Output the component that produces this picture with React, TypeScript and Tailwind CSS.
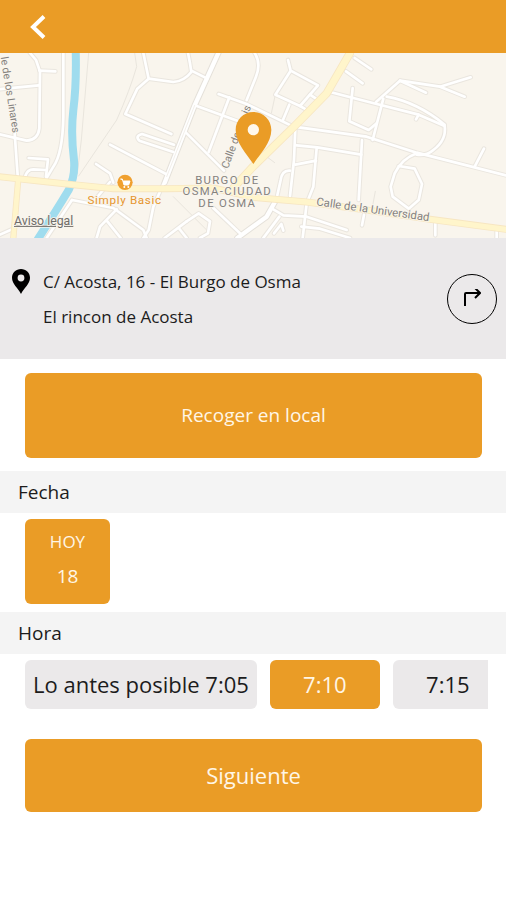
import { useState } from "react";
import clsx from "clsx";

const minorRoads = [
  // west side
  "M90 159 L108 180 L120 215 L118 385 Q114 420 80 422 L-5 402",
  "M118 212 L166 214",
  "M-5 268 L116 256",
  "M44 400 L54 540",
  "M190 159 L190 350 Q188 460 160 500 L136 540",
  "M76 528 Q82 508 100 508 L136 510",
  "M86 474 L144 478 L138 530",
  "M-5 706 L40 686",
  // between the river and the centre
  "M430 159 L446 236 L412 266 L376 342 L514 402",
  "M446 236 L520 246 Q552 244 574 216 L570 190 L564 159",
  "M574 212 L622 236",
  "M330 434 L498 522",
  "M522 434 L426 402 Q404 408 418 422 L520 456",
  "M584 316 L716 364",
  "M554 394 L672 512",
  "M656 282 L740 312 L880 380",
  "M688 292 L626 456",
  "M288 492 L330 520 L340 548",
  "M216 600 L340 624 L430 690 L440 714",
  "M140 714 L216 600",
  "M350 628 L300 680 L290 714",
  "M284 600 L330 546",
  "M490 552 L460 620 L446 690 L430 714",
  "M322 664 L362 714",
  "M494 714 L560 664",
  "M640 624 L720 700 M536 684 L560 714",
  "M560 664 L596 640 L630 664 L624 700 L600 714",
  // east side
  "M764 159 Q784 190 768 230 L740 300",
  "M864 180 L872 212 L826 284 L900 318 L954 256 L872 212",
  "M868 314 L848 362",
  "M900 318 L914 326",
  "M930 284 L948 296",
  "M1064 174 L1114 208",
  "M1038 214 L1088 250",
  "M990 276 L1130 312 L1256 344 L1334 378 Q1340 420 1300 450 Q1280 468 1250 464",
  "M1058 264 L1048 364 L1106 390 L1130 370",
  "M1128 306 L1200 242 L1320 260 L1412 232",
  "M1200 242 L1278 278 M1320 260 L1394 290",
  "M1160 290 Q1250 306 1334 374",
  "M1256 344 L1248 358",
  "M1150 296 L1118 420",
  "M880 380 L1100 410 L1250 458 L1518 526",
  "M1424 500 L1452 446",
  "M886 384 L882 480 L870 588",
  "M890 436 L952 442 L1084 464",
  "M886 494 L948 482",
  "M950 444 L940 560 L920 610 L908 714",
  "M1086 420 L1076 600",
  "M1250 460 Q1206 476 1184 520 L1172 560 L1178 590 L1226 626 L1256 600 L1266 552 L1244 506 L1196 498",
  "M870 512 Q846 510 842 540 L832 586",
  "M1092 644 L1086 676",
  "M820 628 L850 646 L920 650 L1040 690",
  "M838 650 L790 714",
  "M822 700 L844 672 L850 692",
  "M904 680 L960 686 L1050 714",
  "M1306 668 L1306 706 M1490 690 L1490 714",
];

const thinPaths = [
  "M266 159 L244 420 L232 520",
  "M404 159 L410 200 Q390 270 350 360 L236 528",
  "M520 590 L620 690",
  "M826 284 L814 340",
  "M800 470 L824 488",
  "M1126 574 L1118 616",
];

const mediumRoads = ["M655 159 L584 316 L494 548", "M712 714 L800 650 L828 600"];

const yellowRoads = [
  { d: "M54 546 L40 714", w: 14 },
  { d: "M-5 530 L220 554 L340 566 L500 566 L640 564 L759 592 L920 606 L1100 630 L1290 658 L1518 688", w: 16 },
  { d: "M700 564 L759 500 L880 382 L980 280 L1050 159", w: 20 },
];

function StreetMap() {
  return (
    <svg
      viewBox="0 159 1518 555"
      preserveAspectRatio="xMidYMid slice"
      className="block h-[185px] w-full bg-[#f9f5ed]"
      role="img"
      aria-label="Mapa de El Burgo de Osma"
    >
      <g fill="none" strokeLinecap="round" strokeLinejoin="round">
        <g stroke="#e9e5dd" strokeWidth="3">
          {thinPaths.map((d) => (
            <path key={d} d={d} />
          ))}
        </g>
        {/* casing first, then the white fill on top */}
        <g stroke="#eae6df" strokeWidth="14">
          {minorRoads.map((d) => (
            <path key={d} d={d} />
          ))}
        </g>
        <g stroke="#e5e1da" strokeWidth="19">
          {mediumRoads.map((d) => (
            <path key={d} d={d} />
          ))}
        </g>
        <g stroke="#ffffff" strokeWidth="8">
          {minorRoads.map((d) => (
            <path key={d} d={d} />
          ))}
        </g>
        <g stroke="#ffffff" strokeWidth="13">
          {mediumRoads.map((d) => (
            <path key={d} d={d} />
          ))}
        </g>
        <path d="M584 316 L500 530" stroke="#ebe7e0" strokeWidth="2" />

        {/* river */}
        <path
          d="M227 150 Q230 250 220 330 Q212 400 222 480 Q226 530 206 570 Q170 630 112 720"
          stroke="#9fdcee"
          strokeWidth="24"
          strokeLinecap="butt"
        />

        {yellowRoads.map((road) => (
          <path key={road.d} d={road.d} stroke="#f7e6c2" strokeWidth={road.w + 5} />
        ))}
        {yellowRoads.map((road) => (
          <path key={road.d} d={road.d} stroke="#fff5cb" strokeWidth={road.w} />
        ))}
      </g>

      <g
        className="font-['Roboto',sans-serif]"
        fill="#85827e"
        stroke="#f9f5ed"
        strokeWidth="5"
        paintOrder="stroke"
      >
        <text transform="translate(2 172) rotate(81)" fontSize="32">
          le de los Linares
        </text>
        <text transform="translate(684 508) rotate(-70)" fontSize="32">
          Calle de
        </text>
        <text transform="translate(744 344) rotate(-66)" fontSize="32">
          is
        </text>
        <text transform="translate(948 616) rotate(8)" fontSize="34">
          Calle de la Universidad
        </text>
        <g fontSize="34" textAnchor="middle" className="tracking-[4px]">
          <text x="682" y="551">BURGO DE</text>
          <text x="682" y="586">OSMA-CIUDAD</text>
          <text x="682" y="622">DE OSMA</text>
        </g>
        <text x="374" y="612" fontSize="35" textAnchor="middle" fill="#e6962f" className="tracking-[2px]">
          Simply Basic
        </text>
        <text x="42" y="674" fontSize="37" fill="#6f6d6a" textDecoration="underline">
          Aviso legal
        </text>
      </g>

      {/* shop marker */}
      <circle cx="375" cy="547" r="23" fill="#f0a02f" />
      <path d="M361 537 h6 l5 18 h14 l4 -12 h-20" fill="#fff" stroke="#fff" strokeWidth="3" strokeLinejoin="round" />
      <circle cx="373" cy="561" r="3" fill="#fff" />
      <circle cx="385" cy="561" r="3" fill="#fff" />

      {/* place pin */}
      <path
        fill="#ea9c26"
        d="M760 336 C730 336 707 360 707 390 C707 428 740 462 760 492 C780 462 814 428 814 390 C814 360 790 336 760 336 Z"
      />
      <circle cx="760" cy="389" r="17" fill="#fff8ec" />
    </svg>
  );
}

function PinIcon() {
  return (
    <svg viewBox="0 0 18 25" className="h-[25px] w-[18px] shrink-0" aria-hidden="true">
      <path
        fillRule="evenodd"
        d="M9 0 C4 0 0 3.8 0 8.8 C0 15 6 19 9 25 C12 19 18 15 18 8.8 C18 3.8 14 0 9 0 Z M9 5.6 a3.4 3.4 0 1 1 0 6.8 a3.4 3.4 0 1 1 0 -6.8 Z"
      />
    </svg>
  );
}

function SectionTitle({ children }: { children: string }) {
  return <h2 className="bg-[#f4f4f4] px-[18px] py-2 text-[19px] leading-[26px]">{children}</h2>;
}

const times = [
  { value: "7:05", label: "Lo antes posible 7:05" },
  { value: "7:10", label: "7:10" },
  { value: "7:15", label: "7:15" },
];

export default function App() {
  const [time, setTime] = useState("7:10");

  return (
    <div className="min-h-screen bg-white font-['Open_Sans',sans-serif] text-[#1c1c1c]">
      <header className="flex h-[53px] items-center bg-[#ea9c26] px-7">
        <button type="button" aria-label="Volver" className="p-0.5">
          <svg viewBox="0 0 16 26" className="h-[26px] w-4" fill="none" stroke="#fff" strokeWidth="4">
            <path d="M14 2.5 L3 13 L14 23.5" />
          </svg>
        </button>
      </header>

      <StreetMap />

      <section className="flex items-start bg-[#ebe9ea] pt-[26px] pr-[9px] pb-[25px] pl-3">
        <div className="pt-[5px]">
          <PinIcon />
        </div>
        <address className="ml-[13px] flex-1 text-[17px] leading-[35px] not-italic">
          <p>C/ Acosta, 16 - El Burgo de Osma</p>
          <p>El rincon de Acosta</p>
        </address>
        <button
          type="button"
          aria-label="Cómo llegar"
          className="mt-2.5 flex size-[50px] shrink-0 items-center justify-center rounded-full border border-black"
        >
          <svg viewBox="0 0 18 20" className="h-5 w-[18px]" fill="none" stroke="#000" strokeWidth="2">
            <path d="M2 17 V5 Q2 4 3 4 H17 M12 -1 L17 4 L12 9" />
          </svg>
        </button>
      </section>

      <main className="pt-3.5">
        <div className="pr-6 pb-[13px] pl-[25px]">
          <button type="button" className="h-[85px] w-full rounded-md bg-[#ea9c26] text-[19px] text-[#fff6e6]">
            Recoger en local
          </button>
        </div>

        <SectionTitle>Fecha</SectionTitle>
        <div className="pr-6 pt-1.5 pb-2 pl-[25px]">
          <button
            type="button"
            aria-pressed="true"
            className="size-[85px] rounded-md bg-[#ea9c26] pb-1.5 leading-[35px] text-[#fff6e6]"
          >
            <span className="block text-[17px]">HOY</span>
            <span className="block text-[19px]">18</span>
          </button>
        </div>

        <SectionTitle>Hora</SectionTitle>
        <div className="mr-[18px] ml-[25px] flex gap-[13px] overflow-hidden pt-1.5">
          {times.map((t) => (
            <button
              key={t.value}
              type="button"
              aria-pressed={time === t.value}
              onClick={() => setTime(t.value)}
              className={clsx(
                "h-[49px] min-w-[110px] shrink-0 rounded-md px-2 text-[22px]",
                time === t.value ? "bg-[#ea9c26] text-[#fff6e6]" : "bg-[#ebe9ea]"
              )}
            >
              {t.label}
            </button>
          ))}
        </div>

        <div className="pt-[30px] pr-6 pl-[25px]">
          <button type="button" className="h-[73px] w-full rounded-md bg-[#ea9c26] text-[22px] text-[#fff6e6]">
            Siguiente
          </button>
        </div>
      </main>
    </div>
  );
}
